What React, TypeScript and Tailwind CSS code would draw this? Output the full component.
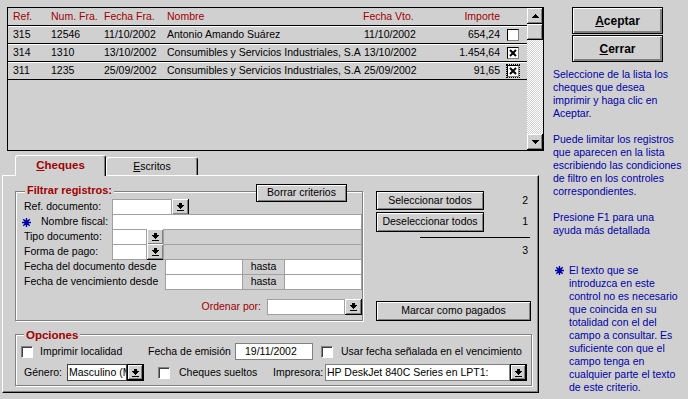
import React from 'react'

// Win95-ish bevels
const raised = 'bg-[#d0d0d0] shadow-[inset_-1px_-1px_#000,inset_1px_1px_#fff,inset_-2px_-2px_#808080]'
const button = 'border border-black bg-[#d0d0d0] shadow-[inset_1px_1px_#fff,inset_-1px_-1px_#808080] flex items-center justify-center'
const field = 'bg-white border border-[#a0a0a0]'
const etched = 'border border-[#808080] shadow-[inset_1px_1px_#fff,1px_1px_#fff]'

const rows = [
  { ref: '315', num: '12546', fecha: '11/10/2002', nombre: 'Antonio Amando Suárez', vto: '11/10/2002', importe: '654,24', checked: false, focus: false },
  { ref: '314', num: '1310', fecha: '13/10/2002', nombre: 'Consumibles y Servicios Industriales, S.A', vto: '13/10/2002', importe: '1.454,64', checked: true, focus: false },
  { ref: '311', num: '1235', fecha: '25/09/2002', nombre: 'Consumibles y Servicios Industriales, S.A', vto: '25/09/2002', importe: '91,65', checked: true, focus: true },
]

const help1 = ['Seleccione de la lista los', 'cheques que desea', 'imprimir y haga clic en', 'Aceptar.']
const help2 = ['Puede limitar los registros', 'que aparecen en la lista', 'escribiendo las condiciones', 'de filtro en los controles', 'correspondientes.']
const help3 = ['Presione F1 para una', 'ayuda más detallada']
const help4 = ['El texto que se', 'introduzca en este', 'control no es necesario', 'que coincida en su', 'totalidad con el del', 'campo a consultar. Es', 'suficiente con que el', 'campo tenga en', 'cualquier parte el texto', 'de este criterio.']

export default function App() {
  return (
    <div className="flex w-[688px] h-[399px] overflow-hidden bg-[#d0d0d0] text-[10.5px] text-black font-['Liberation_Sans',Arial,sans-serif]">
      {/* Left side: list + tabs */}
      <div className="w-[545px] flex flex-col">
        <div className="ml-[7px] mt-[7px] w-[537px] h-[144px] border border-black flex">
          <div className="flex-1 flex flex-col">
            <div className="h-[17px] flex items-center text-[#a00000]">
              <div className="w-[43px] pl-[5px]">Ref.</div>
              <div className="w-[53px]">Num. Fra.</div>
              <div className="w-[63px]">Fecha Fra.</div>
              <div className="w-[196px]">Nombre</div>
              <div className="w-[77px]">Fecha Vto.</div>
              <div className="w-[60px] text-right">Importe</div>
            </div>
            {rows.map((r) => (
              <div key={r.ref} className="h-[18px] border-t border-black shadow-[inset_0_1px_#fff] flex items-center pt-px">
                <div className="w-[43px] pl-[5px]">{r.ref}</div>
                <div className="w-[53px]">{r.num}</div>
                <div className="w-[63px]">{r.fecha}</div>
                <div className="w-[196px] overflow-hidden whitespace-nowrap">{r.nombre}</div>
                <div className="w-[77px] pl-px">{r.vto}</div>
                <div className="w-[60px] text-right">{r.importe}</div>
                <div className="pl-[7px]">
                  <ListCheck checked={r.checked} focus={r.focus} />
                </div>
              </div>
            ))}
            <div className="h-px bg-black" />
          </div>
          {/* scrollbar */}
          <div className="w-[16px] flex flex-col">
            <div className={`h-[16px] flex items-center justify-center ${raised}`}>
              <UpArrow />
            </div>
            <div className={`h-[16px] ${raised}`} />
            <div className="flex-1 bg-[repeating-conic-gradient(#ffffff_0%_25%,#d0d0d0_0%_50%)] bg-[length:2px_2px]" />
            <div className={`h-[16px] flex items-center justify-center ${raised}`}>
              <DownArrow />
            </div>
          </div>
        </div>

        {/* Tabs */}
        <div className="mt-[4px] ml-[15px] h-[20px] flex items-start">
          <div className="relative z-10 w-[91px] h-[21px] bg-[#d0d0d0] rounded-t-[3px] border-l border-t border-r border-l-white border-t-white border-r-black shadow-[inset_-1px_0_#808080] flex items-center justify-center font-bold text-[11.5px] text-[#a00000]">
            <span><span className="underline">C</span>heques</span>
          </div>
          <div className="mt-[2px] w-[92px] h-[18px] rounded-t-[3px] border-l border-t border-r border-l-white border-t-white border-r-black shadow-[inset_-1px_0_#808080] flex items-center justify-center">
            <span><span className="underline">E</span>scritos</span>
          </div>
        </div>

        {/* Tab page */}
        <div className="ml-[2px] w-[537px] h-[218px] border border-t-white border-l-white border-r-black border-b-black shadow-[inset_-1px_-1px_#808080] flex flex-col pl-[12px] pt-[15px]">
          <div className="flex h-[130px]">
            {/* Filtrar registros */}
            <div className={`relative w-[348px] h-[130px] pt-[7px] ${etched}`}>
              <span className="absolute left-[9px] top-[-9px] px-[2px] leading-[14px] bg-[#d0d0d0] font-bold text-[11px] text-[#a00000]">Filtrar registros:</span>
              <div className={`absolute left-[240px] top-[-8px] w-[91px] h-[18px] ${button}`}>Borrar criterios</div>

              <div className="flex h-[16px]">
                <div className="w-[96px] pl-[8px] flex items-center">Ref. documento:</div>
                <div className={`w-[60px] ${field}`} />
                <div className={`w-[17px] flex items-center justify-center ${raised}`}><DropArrow /></div>
              </div>
              <div className="flex h-[16px] -mt-px">
                <div className="w-[96px] pl-[6px] flex items-center">
                  <Star />
                  <span className="ml-[10px]">Nombre fiscal:</span>
                </div>
                <div className={`w-[250px] ${field}`} />
              </div>
              <div className="flex h-[16px] -mt-px">
                <div className="w-[96px] pl-[8px] flex items-center">Tipo documento:</div>
                <div className={`w-[35px] ${field}`} />
                <div className={`w-[17px] flex items-center justify-center ${raised}`}><DropArrow /></div>
                <div className="-ml-px w-[199px] border border-[#a0a0a0]" />
              </div>
              <div className="flex h-[16px] -mt-px">
                <div className="w-[96px] pl-[8px] flex items-center">Forma de pago:</div>
                <div className={`w-[35px] ${field}`} />
                <div className={`w-[17px] flex items-center justify-center ${raised}`}><DropArrow /></div>
                <div className="-ml-px w-[199px] border border-[#a0a0a0]" />
              </div>
              <div className="flex h-[16px] -mt-px">
                <div className="w-[149px] pl-[8px] flex items-center">Fecha del documento desde</div>
                <div className={`w-[78px] ${field}`} />
                <div className="-ml-px w-[43px] border border-[#a0a0a0] flex items-center justify-center">hasta</div>
                <div className={`-ml-px w-[78px] ${field}`} />
              </div>
              <div className="flex h-[16px] -mt-px">
                <div className="w-[149px] pl-[8px] flex items-center">Fecha de vencimiento desde</div>
                <div className={`w-[78px] ${field}`} />
                <div className="-ml-px w-[43px] border border-[#a0a0a0] flex items-center justify-center">hasta</div>
                <div className={`-ml-px w-[78px] ${field}`} />
              </div>
              <div className="flex h-[16px] mt-[9px]">
                <div className="w-[251px] pr-[6px] flex items-center justify-end text-[#a00000]">Ordenar por:</div>
                <div className={`w-[78px] ${field}`} />
                <div className={`w-[17px] flex items-center justify-center ${raised}`}><DropArrow /></div>
              </div>
            </div>

            {/* selection buttons */}
            <div className="ml-[13px] w-[155px] flex flex-col">
              <div className="h-[19px] flex items-center">
                <div className={`w-[108px] h-full ${button}`}>Seleccionar todos</div>
                <span className="flex-1 text-right pr-[3px]">2</span>
              </div>
              <div className="mt-[2px] h-[20px] flex items-center">
                <div className={`w-[108px] h-full ${button}`}>Deseleccionar todos</div>
                <span className="flex-1 text-right pr-[3px]">1</span>
              </div>
              <div className="ml-[44px] mt-[5px] w-[110px] h-px bg-black" />
              <div className="mt-[6px] leading-[13px] text-right pr-[3px]">3</div>
              <div className={`mt-auto h-[20px] ${button}`}>Marcar como pagados</div>
            </div>
          </div>

          {/* Opciones */}
          <div className={`relative mt-[13px] w-[517px] h-[52px] pt-[8px] ${etched}`}>
            <span className="absolute left-[8px] top-[-7px] px-[2px] leading-[14px] bg-[#d0d0d0] font-bold text-[11.5px] text-[#a00000]">Opciones</span>
            <div className="h-[17px] flex items-center">
              <OptCheck className="ml-[5px]" />
              <span className="ml-[7px] w-[108px]">Imprimir localidad</span>
              <span className="w-[87px]">Fecha de emisión</span>
              <div className="w-[78px] h-[17px] bg-white border border-[#808080] pl-[9px] flex items-center">19/11/2002</div>
              <OptCheck className="ml-[8px]" />
              <span className="ml-[8px]">Usar fecha señalada en el vencimiento</span>
            </div>
            <div className="mt-[4px] h-[17px] flex items-center">
              <span className="ml-[8px] w-[43px]">Género:</span>
              <div className="w-[60px] h-full bg-white border border-[#404040] pl-px flex items-center overflow-hidden whitespace-nowrap">Masculino (M)</div>
              <div className={`w-[17px] h-full border border-black flex items-center justify-center ${raised}`}><DropArrow /></div>
              <OptCheck className="ml-[14px]" />
              <span className="ml-[9px] w-[94px]">Cheques sueltos</span>
              <span className="w-[52px]">Impresora:</span>
              <div className="w-[185px] h-full bg-white border border-[#808080] pl-px flex items-center overflow-hidden whitespace-nowrap">HP DeskJet 840C Series en LPT1:</div>
              <div className={`w-[17px] h-full border border-black flex items-center justify-center ${raised}`}><DropArrow /></div>
            </div>
          </div>
        </div>
      </div>

      {/* Right side: buttons + help */}
      <div className="flex-1 flex flex-col">
        <div className={`ml-[27px] mt-[7px] w-[91px] h-[27px] font-bold text-[12px] ${button} shadow-[inset_1px_1px_#fff,inset_-2px_-2px_#808080]`}>
          <span><span className="underline">A</span>ceptar</span>
        </div>
        <div className={`ml-[27px] mt-px w-[91px] h-[27px] font-bold text-[12px] ${button} shadow-[inset_1px_1px_#fff,inset_-2px_-2px_#808080]`}>
          <span><span className="underline">C</span>errar</span>
        </div>
        <div className="ml-[8px] mt-[6px] leading-[13px] text-[#0000a8] whitespace-nowrap">
          {help1.map((l) => <div key={l}>{l}</div>)}
          <div className="mt-[13px]">
            {help2.map((l) => <div key={l}>{l}</div>)}
          </div>
          <div className="mt-[13px]">
            {help3.map((l) => <div key={l}>{l}</div>)}
          </div>
          <div className="mt-[27px] flex">
            <div className="w-[16px] pt-[2px] pl-[2px]"><Star /></div>
            <div>
              {help4.map((l) => <div key={l}>{l}</div>)}
            </div>
          </div>
        </div>
      </div>
    </div>
  )
}

function ListCheck({ checked, focus }: { checked: boolean; focus: boolean }) {
  return (
    <div
      className={`w-[12px] h-[12px] bg-white border border-black border-r-[#808080] border-b-[#808080] flex items-center justify-center ${
        focus ? 'outline outline-1 outline-dotted outline-black' : ''
      }`}
    >
      {checked && (
        <svg width="8" height="8" viewBox="0 0 8 8">
          <path d="M1 1L7 7M7 1L1 7" stroke="#000" strokeWidth={2} />
        </svg>
      )}
    </div>
  )
}

function OptCheck({ className }: { className?: string }) {
  return (
    <div className={`w-[12px] h-[12px] bg-white border border-t-[#808080] border-l-[#808080] border-r-white border-b-white shadow-[inset_1px_1px_#404040] ${className ?? ''}`} />
  )
}

function DropArrow() {
  return (
    <svg width="7" height="8" viewBox="0 0 7 8" shapeRendering="crispEdges">
      <rect x="2" y="0" width="3" height="2" fill="#000" />
      <rect x="0" y="2" width="7" height="1" fill="#000" />
      <rect x="1" y="3" width="5" height="1" fill="#000" />
      <rect x="2" y="4" width="3" height="1" fill="#000" />
      <rect x="3" y="5" width="1" height="1" fill="#000" />
      <rect x="0" y="7" width="7" height="1" fill="#000" />
    </svg>
  )
}

function UpArrow() {
  return (
    <svg width="7" height="4" viewBox="0 0 7 4" shapeRendering="crispEdges">
      <path d="M3 0h1v1h1v1h1v1h1v1H0V3h1V2h1V1h1z" fill="#000" />
    </svg>
  )
}

function DownArrow() {
  return (
    <svg width="7" height="4" viewBox="0 0 7 4" shapeRendering="crispEdges">
      <path d="M0 0h7v1H6v1H5v1H4v1H3V3H2V2H1V1H0z" fill="#000" />
    </svg>
  )
}

function Star() {
  return (
    <svg width="9" height="9" viewBox="0 0 9 9">
      <g stroke="#0000a8" strokeWidth={1.4}>
        <path d="M4.5 0V9M0 4.5H9M1.3 1.3L7.7 7.7M7.7 1.3L1.3 7.7" />
      </g>
      <circle cx="4.5" cy="4.5" r="2.2" fill="#0000a8" />
    </svg>
  )
}
